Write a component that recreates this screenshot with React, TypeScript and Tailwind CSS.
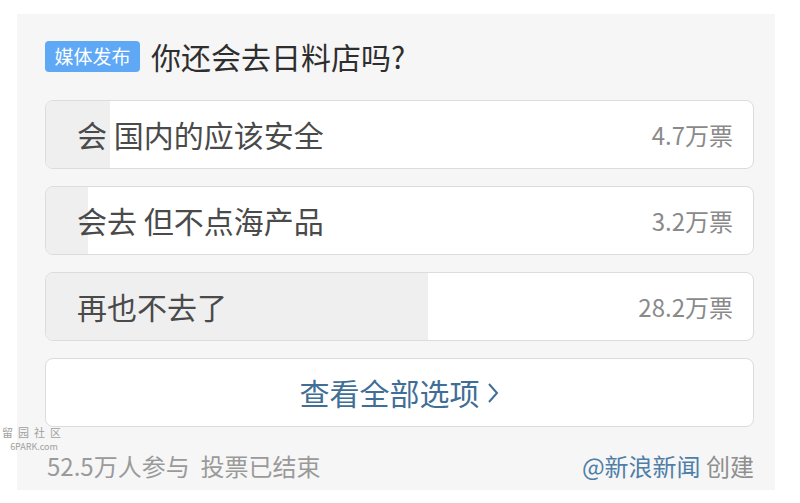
const options = [
  { label: "会 国内的应该安全", votes: "4.7万票", pct: 9 },
  { label: "会去 但不点海产品", votes: "3.2万票", pct: 6 },
  { label: "再也不去了", votes: "28.2万票", pct: 54 },
];

function Option({ label, votes, pct }: { label: string; votes: string; pct: number }) {
  return (
    <div className="relative h-[69px] rounded-[8px] border border-[#dcdcdc] bg-white overflow-hidden">
      <div className="absolute inset-y-0 left-0 bg-[#efefef]" style={{ width: `${pct}%` }} />
      <div className="relative flex h-full items-center justify-between pl-[31px] pr-[20px]">
        <span className="text-[30px] text-[#4a4a4a]">{label}</span>
        <span className="text-[24px] text-[#8a8a8a]">{votes}</span>
      </div>
    </div>
  );
}

export default function App() {
  return (
    <div
      className="relative h-[503px] w-[800px] bg-white pt-[14px] pl-[17px]"
      style={{ fontFamily: '"Noto Sans CJK SC", "Noto Sans", sans-serif' }}
    >
      <div className="h-[476px] w-[758px] bg-[#f6f6f6] pt-[26px] pl-[28px] pr-[21px]">
        <div className="flex items-center gap-[11px]">
          <span className="flex h-[31px] w-[95px] items-center justify-center rounded-[4px] bg-[#5ea8f6] text-[19px] text-white">
            媒体发布
          </span>
          <span className="text-[30px] leading-[32px] text-[#2e2e2e]">你还会去日料店吗?</span>
        </div>

        <div className="mt-[28px] flex flex-col gap-[17px]">
          {options.map((o) => (
            <Option key={o.label} {...o} />
          ))}
          <div className="flex h-[69px] items-center justify-center gap-[6px] rounded-[8px] border border-[#dcdcdc] bg-white text-[30px] text-[#3f6e97]">
            查看全部选项
            <svg width="14" height="26" viewBox="0 0 14 26" fill="none" stroke="#3f6e97" strokeWidth="2">
              <path d="M3 4l8 9-8 9" />
            </svg>
          </div>
        </div>

        <div className="mt-[26px] flex items-center justify-between text-[24px] leading-[26px]">
          <span className="pl-[2px] text-[#9a9a9a]">52.5万人参与&nbsp;&nbsp;投票已结束</span>
          <span>
            <span className="text-[#4f7ea8]">@新浪新闻</span>
            <span className="text-[#8f8f8f]"> 创建</span>
          </span>
        </div>
      </div>

      <div className="absolute left-[2px] top-[427px] flex flex-col items-center gap-[4px] text-[#a0a0a0]">
        <span className="text-[11px] leading-[11px] tracking-[5px]">留园社区</span>
        <span className="text-[9px] leading-[9px]">6PARK.com</span>
      </div>
    </div>
  );
}
